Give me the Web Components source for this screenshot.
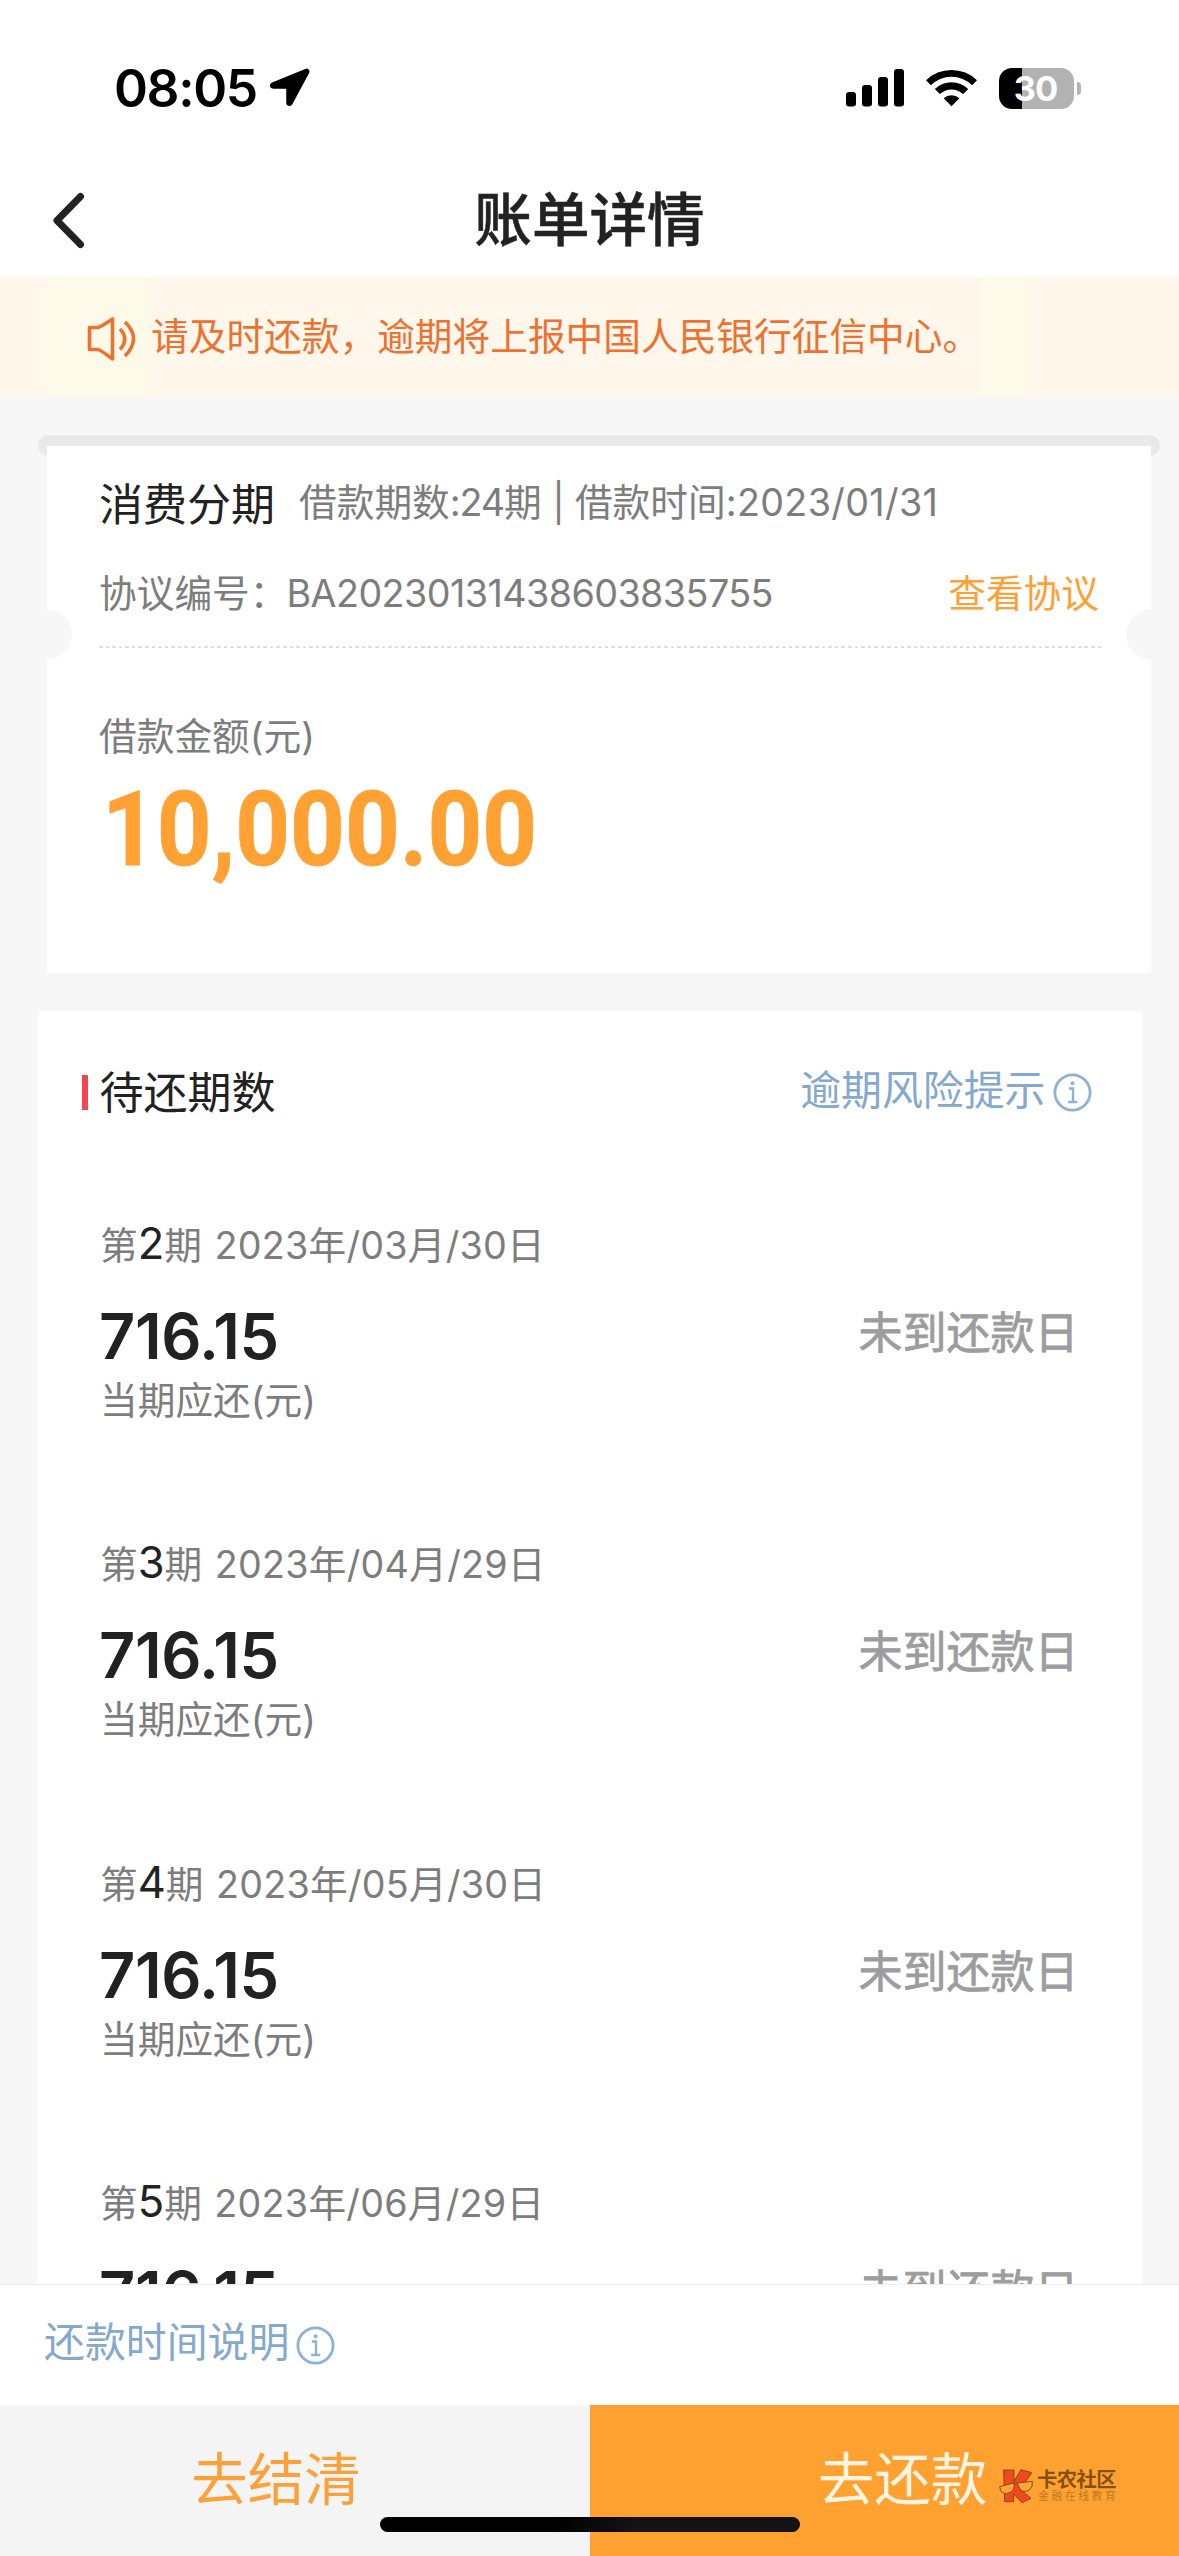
<!DOCTYPE html>
<html lang="zh-CN">
<head>
<meta charset="utf-8">
<title>账单详情</title>
<style>
html,body{margin:0;padding:0}
body{width:1179px;height:2556px;overflow:hidden;background:#f7f7f7;font-family:Inter,"Noto Sans CJK SC",sans-serif;font-size:37.7px;color:#7d7d7d}
</style>
</head>
<body>
<bill-page>
  <status-bar time="08:05" level="30"></status-bar>
  <nav-bar>账单详情</nav-bar>
  <notice-bar>请及时还款，逾期将上报中国人民银行征信中心。</notice-bar>
  <loan-card></loan-card>
  <plan-card>
    <bill-row term="2" date="2023年/03月/30日" note="当期应还(元)"></bill-row>
    <bill-row term="3" date="2023年/04月/29日" note="当期应还(元)"></bill-row>
    <bill-row term="4" date="2023年/05月/30日" note="当期应还(元)"></bill-row>
    <bill-row term="5" date="2023年/06月/29日"></bill-row>
  </plan-card>
  <action-bar slot="footer"></action-bar>
  <brand-mark slot="overlay"></brand-mark>
  <home-indicator slot="overlay"></home-indicator>
</bill-page>
<script>
function define(name, render) {
  customElements.define(name, class extends HTMLElement {
    constructor() {
      super();
      this.attachShadow({ mode: 'open' });
    }
    connectedCallback() {
      this.shadowRoot.innerHTML = render(this);
    }
  });
}

define('bill-page', () => `
<style>
:host{display:flex;flex-direction:column;width:1179px;height:2556px;position:relative;overflow:hidden}
main{flex:1;min-height:0;overflow:hidden;display:flex;flex-direction:column}
</style>
<main><slot></slot></main><slot name="footer"></slot><slot name="overlay"></slot>`);

define('status-bar', el => `
<style>
:host{display:flex;flex:none;height:176px;background:#fff;color:#000;box-sizing:border-box;padding:58px 98px 0 114px;justify-content:space-between;align-items:flex-start}
.l,.r{display:flex;align-items:center;height:60px}
.t{font-size:51.5px;font-weight:600;line-height:60px;letter-spacing:-1.4px;width:156px;white-space:nowrap}
svg{display:block}
.battery{display:flex;align-items:center;gap:3px;margin-left:22px}
.cell{width:75px;height:41px;box-sizing:border-box;padding-right:2px;border-radius:13px;background:linear-gradient(90deg,#000 23px,#b2b2b2 23px);color:#fff;font-size:34.5px;font-weight:700;line-height:42px;text-align:center;letter-spacing:-1px}
.nub{width:4px;height:13px;border-radius:0 5px 5px 0;background:#b2b2b2}
</style>
<div class="l"><span class="t">${el.getAttribute('time')}</span>
<svg width="40" height="40" viewBox="0 0 40 40"><path d="M36 3 3 16.500c-1.300.6-1 2 .3 2h15.200v16c0 1.500 1.400 1.600 2 .4L37 4.200C37.500 3.200 37 2.600 36 3Z" fill="#000" stroke="#000" stroke-width="4.500" stroke-linejoin="round"/></svg></div>
<div class="r">
<svg width="58" height="38" viewBox="0 0 58 38"><rect y="23" width="10" height="14.500" rx="3"/><rect x="16" y="16" width="10" height="21.500" rx="3"/><rect x="32" y="8" width="10" height="29.500" rx="3"/><rect x="48" width="10" height="37.500" rx="3"/></svg>
<svg style="margin-left:22px" width="51" height="38" viewBox="0 0 51 38"><path d="M0 11.300a36.500 36.500 0 0 1 51 0l-4.900 5a29.200 29.200 0 0 0-41.200 0Z"/><path d="M8.800 20.100a24 24 0 0 1 33.400 0l-5 5a17 17 0 0 0-23.400 0Z"/><path d="M17.700 29.200a11.500 11.500 0 0 1 15.600 0L25.500 37.200Z"/></svg>
<div class="battery"><div class="cell">${el.getAttribute('level')}</div><div class="nub"></div></div>
</div>`);

define('nav-bar', () => `
<style>
:host{display:grid;grid-template-columns:120px 1fr 120px;flex:none;height:101px;background:#fff;color:#222;box-sizing:border-box;padding-top:4px}
svg{display:block;margin:12px 0 0 50px}
h1{margin:0;font-size:57.600px;font-weight:500;line-height:80px;text-align:center;-webkit-text-stroke:.5px #222}
</style>
<svg width="40" height="60" viewBox="0 0 40 60" fill="none" stroke="#222" stroke-width="7" stroke-linecap="round" stroke-linejoin="round"><path d="M30.500 4.500 7 28.500l23.500 24"/></svg>
<h1><slot></slot></h1>`);

define('notice-bar', () => `
<style>
:host{display:flex;flex:none;height:120px;align-items:center;box-sizing:border-box;padding-left:87px;background:linear-gradient(90deg,#fff7eb 40px,#fdfaea 60px,#fdfaea 148px,#fff7eb 152px,#fff7eb 980px,#fdfaea 984px,#fdfaea 1027px,#fff7eb 1030px);color:#ed7130}
svg{display:block;margin:3px 14px 0 0}
span{line-height:60px;white-space:nowrap;margin-top:-2px}
</style>
<svg width="50" height="48" viewBox="0 0 50 48" fill="none" stroke="#ed7130" stroke-width="3.600" stroke-linejoin="round"><path d="M2.500 12.500h8q2.500 0 15-8.500v40q-12.500-9.500-15-9.500h-8Z"/><path d="M33 14q9.500 10 0 20.500M38 7q17 16.500 0 34"/></svg>
<span><slot></slot></span>`);

define('loan-card', () => `
<style>
:host{display:block;flex:none;margin:37.500px 19px 0 38px}
.rail{height:21px;border-radius:10.500px;background:#e9e9e9}
.card{margin:-10px 9px 0;width:1104px;height:527px;box-sizing:border-box;padding:29px 52px 0;background:radial-gradient(circle at 0 188.500px,#f7f7f7 24.500px,transparent 25.500px),radial-gradient(circle at 100% 188.500px,#f7f7f7 24.500px,transparent 25.500px),#fff;position:relative}
.row{display:flex;height:60px;line-height:60px;white-space:nowrap}
.name{font-size:44px;color:#222;width:200px}
.meta{margin-top:-3px}
.n{letter-spacing:-1.100px}
.bar{letter-spacing:-.2px}
.d{letter-spacing:.35px}
.b{margin-top:28px;justify-content:space-between}
.no{letter-spacing:-.57px;margin-left:-1px}
.link{color:#ff9f35}
.dash{height:2px;margin:23.500px -2px 0 0;background:repeating-linear-gradient(90deg,#dedede 0 3.600px,transparent 3.600px 6.570px)}
.label{line-height:60px;margin-top:58px}
.sum{font-family:Roboto,sans-serif;font-weight:700;font-size:103px;line-height:104px;color:#ffa133;transform:scaleX(.928);transform-origin:0 0;margin:12px 0 0 3px;white-space:nowrap;-webkit-text-stroke:.8px #ffa133}
</style>
<div class="rail"></div>
<div class="card">
<div class="row"><span class="name">消费分期</span><span class="meta">借款期数<span class="n">:24</span>期<span class="bar"> | </span>借款时间<span class="d">:2023/01/31</span></span></div>
<div class="row b"><span>协议编号：<span class="no">BA20230131438603835755</span></span><span class="link">查看协议</span></div>
<div class="dash"></div>
<div class="label">借款金额(元)</div>
<div class="sum">10,000.00</div>
</div>`);

define('info-link', () => `
<style>
:host{display:inline-flex;align-items:center;color:#84a9cd;font-size:40.900px;line-height:60px;white-space:nowrap}
svg{display:block;margin:6px 0 0 7px}
</style>
<slot></slot>
<svg width="39" height="39" viewBox="0 0 39 39" fill="none" stroke="#8fb1d3"><circle cx="19.500" cy="19.500" r="17.600" stroke-width="2.800"/><path d="M15.800 15.500h4.200v13.500M15.200 29h9" stroke-width="2.400"/><circle cx="19.500" cy="10.300" r="2" fill="#8fb1d3" stroke="none"/></svg>`);

define('plan-card', () => `
<style>
:host{display:block;flex:none;margin:38px 37.500px 0 38px;background:#fff;height:1500px}
header{display:flex;height:202.500px;box-sizing:border-box;padding:52px 50px 0 43.500px}
.bar{width:6.500px;height:35px;margin-top:12px;background:#f5454f}
.title{font-size:44px;line-height:60px;color:#222;margin:0 0 0 11.500px;flex:1}
info-link{height:60px;margin-top:-3px}
</style>
<header><div class="bar"></div><div class="title">待还期数</div><info-link>逾期风险提示</info-link></header>
<slot></slot>`);

define('bill-row', el => `
<style>
:host{display:flex;justify-content:space-between;height:319.400px;box-sizing:border-box;padding:0 63px 0 62px;white-space:nowrap}
.date{line-height:60px}
.date b{font-weight:400;font-size:43.500px;color:#222}
.date i{font-style:normal;margin-left:12.500px;letter-spacing:.25px}
.amt{font-size:63px;font-weight:600;color:#222;line-height:66px;margin-top:28px;letter-spacing:-.4px;margin-left:-1px}
.sub{line-height:50px;margin-top:6px}
.state{font-size:44px;line-height:60px;color:#9d9d9d;margin-top:90px;-webkit-text-stroke:.8px #9d9d9d}
</style>
<div><div class="date">第<b>${el.getAttribute('term')}</b>期<i>${el.getAttribute('date')}</i></div>
<div class="amt">716.15</div>
<div class="sub">${el.getAttribute('note') || ''}</div></div>
<div class="state">未到还款日</div>`);

define('action-bar', () => `
<style>
:host{display:block;flex:none;height:272px;box-sizing:border-box;border-top:1px solid #efefef;background:#fff}
.tip{height:120px;box-sizing:border-box;padding:27px 0 0 44px}
.btns{display:flex;height:151px;font-size:56.500px;line-height:149px;text-align:center}
.clear{flex:1;background:#f4f4f4;color:#fca039;box-sizing:border-box;padding-right:38px}
.pay{flex:0 0 589px;box-sizing:border-box;padding:0 0 0 36px;text-align:center;background:#ffa131;color:#fff4e2}
.pay{flex-basis:589px}
</style>
<div class="tip"><info-link>还款时间说明</info-link></div>
<div class="btns"><div class="clear">去结清</div><div class="pay">去还款</div></div>`);

define('brand-mark', () => `
<style>
:host{position:absolute;left:999px;top:2469px;display:flex;gap:4px;white-space:nowrap}
svg{display:block}
.n{font-size:20.300px;font-weight:700;line-height:22px;color:#865010;letter-spacing:-.5px}
.s{font-size:10.800px;line-height:12px;color:#bd7826;letter-spacing:2.600px;padding-left:1px}
</style>
<svg width="34" height="35" viewBox="0 0 102 105" stroke="#8a4a10" stroke-width="3" stroke-linejoin="round"><path d="M14 3h31v34L66 2l32 9-24 36-12 13 34 28-27 13-25-26v23H17Z" fill="#f0491e"/><path d="M2 53 44 42q5 18-8 27T10 71Q3 64 2 53ZM55 42l45-5q2 17-8 25t-20 5-17-25Z" fill="#ffa537"/><path d="M44 45q5-5 12-2" fill="none"/></svg>
<div><div class="n">卡农社区</div><div class="s">金融在线教育</div></div>`);

define('home-indicator', () => `
<style>:host{position:absolute;left:380px;top:2517px;width:420px;height:15px;border-radius:8px;background:linear-gradient(90deg,#000 170px,#141414 260px)}</style>`);
</script>
</body>
</html>
